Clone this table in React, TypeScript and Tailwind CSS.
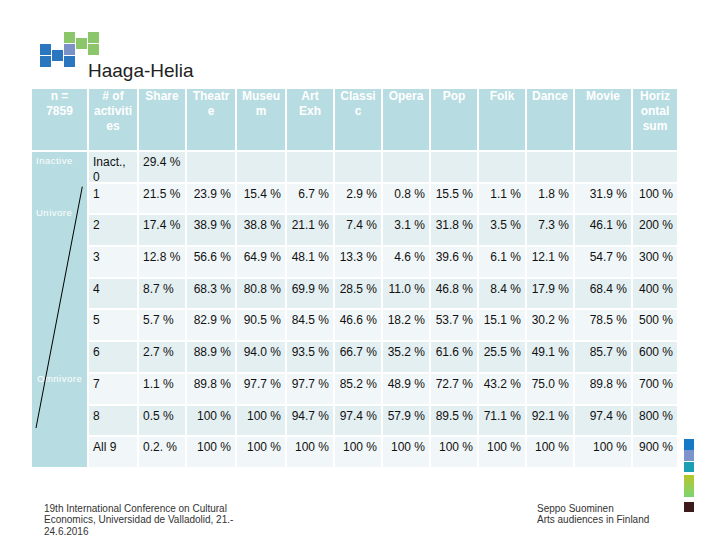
import React from 'react';

const headers: string[][] = [
  ['n =', '7859'],
  ['# of', 'activiti', 'es'],
  ['Share'],
  ['Theatr', 'e'],
  ['Museu', 'm'],
  ['Art', 'Exh'],
  ['Classi', 'c'],
  ['Opera'],
  ['Pop'],
  ['Folk'],
  ['Dance'],
  ['Movie'],
  ['Horiz', 'ontal', 'sum'],
];

// first entry is the "# of activities" label, second the share, then the 10 genre columns
const rows: string[][] = [
  ['Inact.,\n0', '29.4 %', '', '', '', '', '', '', '', '', '', ''],
  ['1', '21.5 %', '23.9 %', '15.4 %', '6.7 %', '2.9 %', '0.8 %', '15.5 %', '1.1 %', '1.8 %', '31.9 %', '100 %'],
  ['2', '17.4 %', '38.9 %', '38.8 %', '21.1 %', '7.4 %', '3.1 %', '31.8 %', '3.5 %', '7.3 %', '46.1 %', '200 %'],
  ['3', '12.8 %', '56.6 %', '64.9 %', '48.1 %', '13.3 %', '4.6 %', '39.6 %', '6.1 %', '12.1 %', '54.7 %', '300 %'],
  ['4', '8.7 %', '68.3 %', '80.8 %', '69.9 %', '28.5 %', '11.0 %', '46.8 %', '8.4 %', '17.9 %', '68.4 %', '400 %'],
  ['5', '5.7 %', '82.9 %', '90.5 %', '84.5 %', '46.6 %', '18.2 %', '53.7 %', '15.1 %', '30.2 %', '78.5 %', '500 %'],
  ['6', '2.7 %', '88.9 %', '94.0 %', '93.5 %', '66.7 %', '35.2 %', '61.6 %', '25.5 %', '49.1 %', '85.7 %', '600 %'],
  ['7', '1.1 %', '89.8 %', '97.7 %', '97.7 %', '85.2 %', '48.9 %', '72.7 %', '43.2 %', '75.0 %', '89.8 %', '700 %'],
  ['8', '0.5 %', '100 %', '100 %', '94.7 %', '97.4 %', '57.9 %', '89.5 %', '71.1 %', '92.1 %', '97.4 %', '800 %'],
  ['All 9', '0.2. %', '100 %', '100 %', '100 %', '100 %', '100 %', '100 %', '100 %', '100 %', '100 %', '900 %'],
];

const Logo: React.FC = () => (
  <div className="h-[89px] pt-[32px] pl-[40px]">
    <svg width="60" height="36" viewBox="0 0 60 36" className="block">
      {/* blue H */}
      <rect x="0" y="12" width="11" height="11" fill="#2b77bf" />
      <rect x="0" y="24" width="11" height="11" fill="#2b77bf" />
      <rect x="12" y="18" width="11" height="11" fill="#2b77bf" />
      <rect x="24" y="24" width="11" height="11" fill="#2b77bf" />
      <rect x="24" y="12" width="11" height="11" fill="#7b92c9" />
      {/* green H */}
      <rect x="24" y="0" width="11" height="11" fill="#8cc66b" />
      <rect x="36" y="6" width="11" height="11" fill="#8cc66b" />
      <rect x="48" y="0" width="11" height="11" fill="#8cc66b" />
      <rect x="48" y="12" width="11" height="11" fill="#8cc66b" />
    </svg>
    <div className="-mt-[7.5px] ml-[48px] text-[19px] leading-[19px] text-[#222]">Haaga-Helia</div>
  </div>
);

const DataTable: React.FC = () => (
  <div className="ml-[32px] grid grid-cols-[55px_48px_46px_48px_48px_46px_46px_46px_46px_46px_46px_56px_44px] grid-rows-[61px_repeat(10,29.7px)] gap-[2px]">
    {headers.map((lines, i) => (
      <div key={`h${i}`} className="bg-[#b7dce1] text-center text-white font-bold text-[12px] leading-[15px]">
        {lines.map((l, j) => (
          <div key={j} className="whitespace-nowrap">{l}</div>
        ))}
      </div>
    ))}

    {/* merged label column with the inactive -> omnivore scale */}
    <div className="row-span-10 relative bg-[#b7dce1] pl-[4px] pt-[2.5px] text-white text-[9.5px] leading-[12px] tracking-[0.5px]">
      <div>Inactive</div>
      <div className="mt-[40px]">Univore</div>
      <div className="mt-[154px] pl-[1px]">Omnivore</div>
      <svg className="absolute left-0 top-0" width="55" height="315" viewBox="0 0 55 315">
        <line x1="50.3" y1="34.7" x2="4" y2="276" stroke="#000" strokeWidth="1" />
      </svg>
    </div>

    {rows.map((row, r) =>
      row.map((cell, c) => (
        <div
          key={`${r}-${c}`}
          className={`${r % 2 === 0 ? 'bg-[#e4eff1]' : 'bg-[#f1f7f8]'} pt-[3px] text-[12px] leading-[15px] text-[#111] whitespace-pre ${
            c < 2 ? 'pl-[4px] text-left' : 'pr-[4px] text-right'
          }`}
        >
          {cell}
        </div>
      ))
    )}
  </div>
);

const Footer: React.FC = () => (
  <div className="mt-[36px] flex text-[10px] leading-[11.5px] text-[#333]">
    <div className="w-[537px] pl-[44px]">
      <div>19th International Conference on Cultural</div>
      <div>Economics, Universidad de Valladolid, 21.-</div>
      <div>24.6.2016</div>
    </div>
    <div>
      <div>Seppo Suominen</div>
      <div>Arts audiences in Finland</div>
    </div>
  </div>
);

const Stripes: React.FC = () => (
  <div className="w-[10px] pt-[439px] flex flex-col">
    <div className="h-[11px] bg-[#1679c8]" />
    <div className="h-[11px] bg-[#7d93cc]" />
    <div className="h-[1px]" />
    <div className="h-[10px] bg-[#1a9fb3]" />
    <div className="h-[3px]" />
    <div className="h-[22px] bg-gradient-to-b from-[#b4c722] to-[#7bd46e]" />
    <div className="h-[5px]" />
    <div className="h-[10px] bg-[#3d1b1b]" />
  </div>
);

export default function App() {
  return (
    <div className="w-[720px] h-[540px] overflow-hidden bg-white flex font-['Liberation_Sans',Arial,sans-serif]">
      <div className="w-[684px]">
        <Logo />
        <DataTable />
        <Footer />
      </div>
      <Stripes />
    </div>
  );
}
